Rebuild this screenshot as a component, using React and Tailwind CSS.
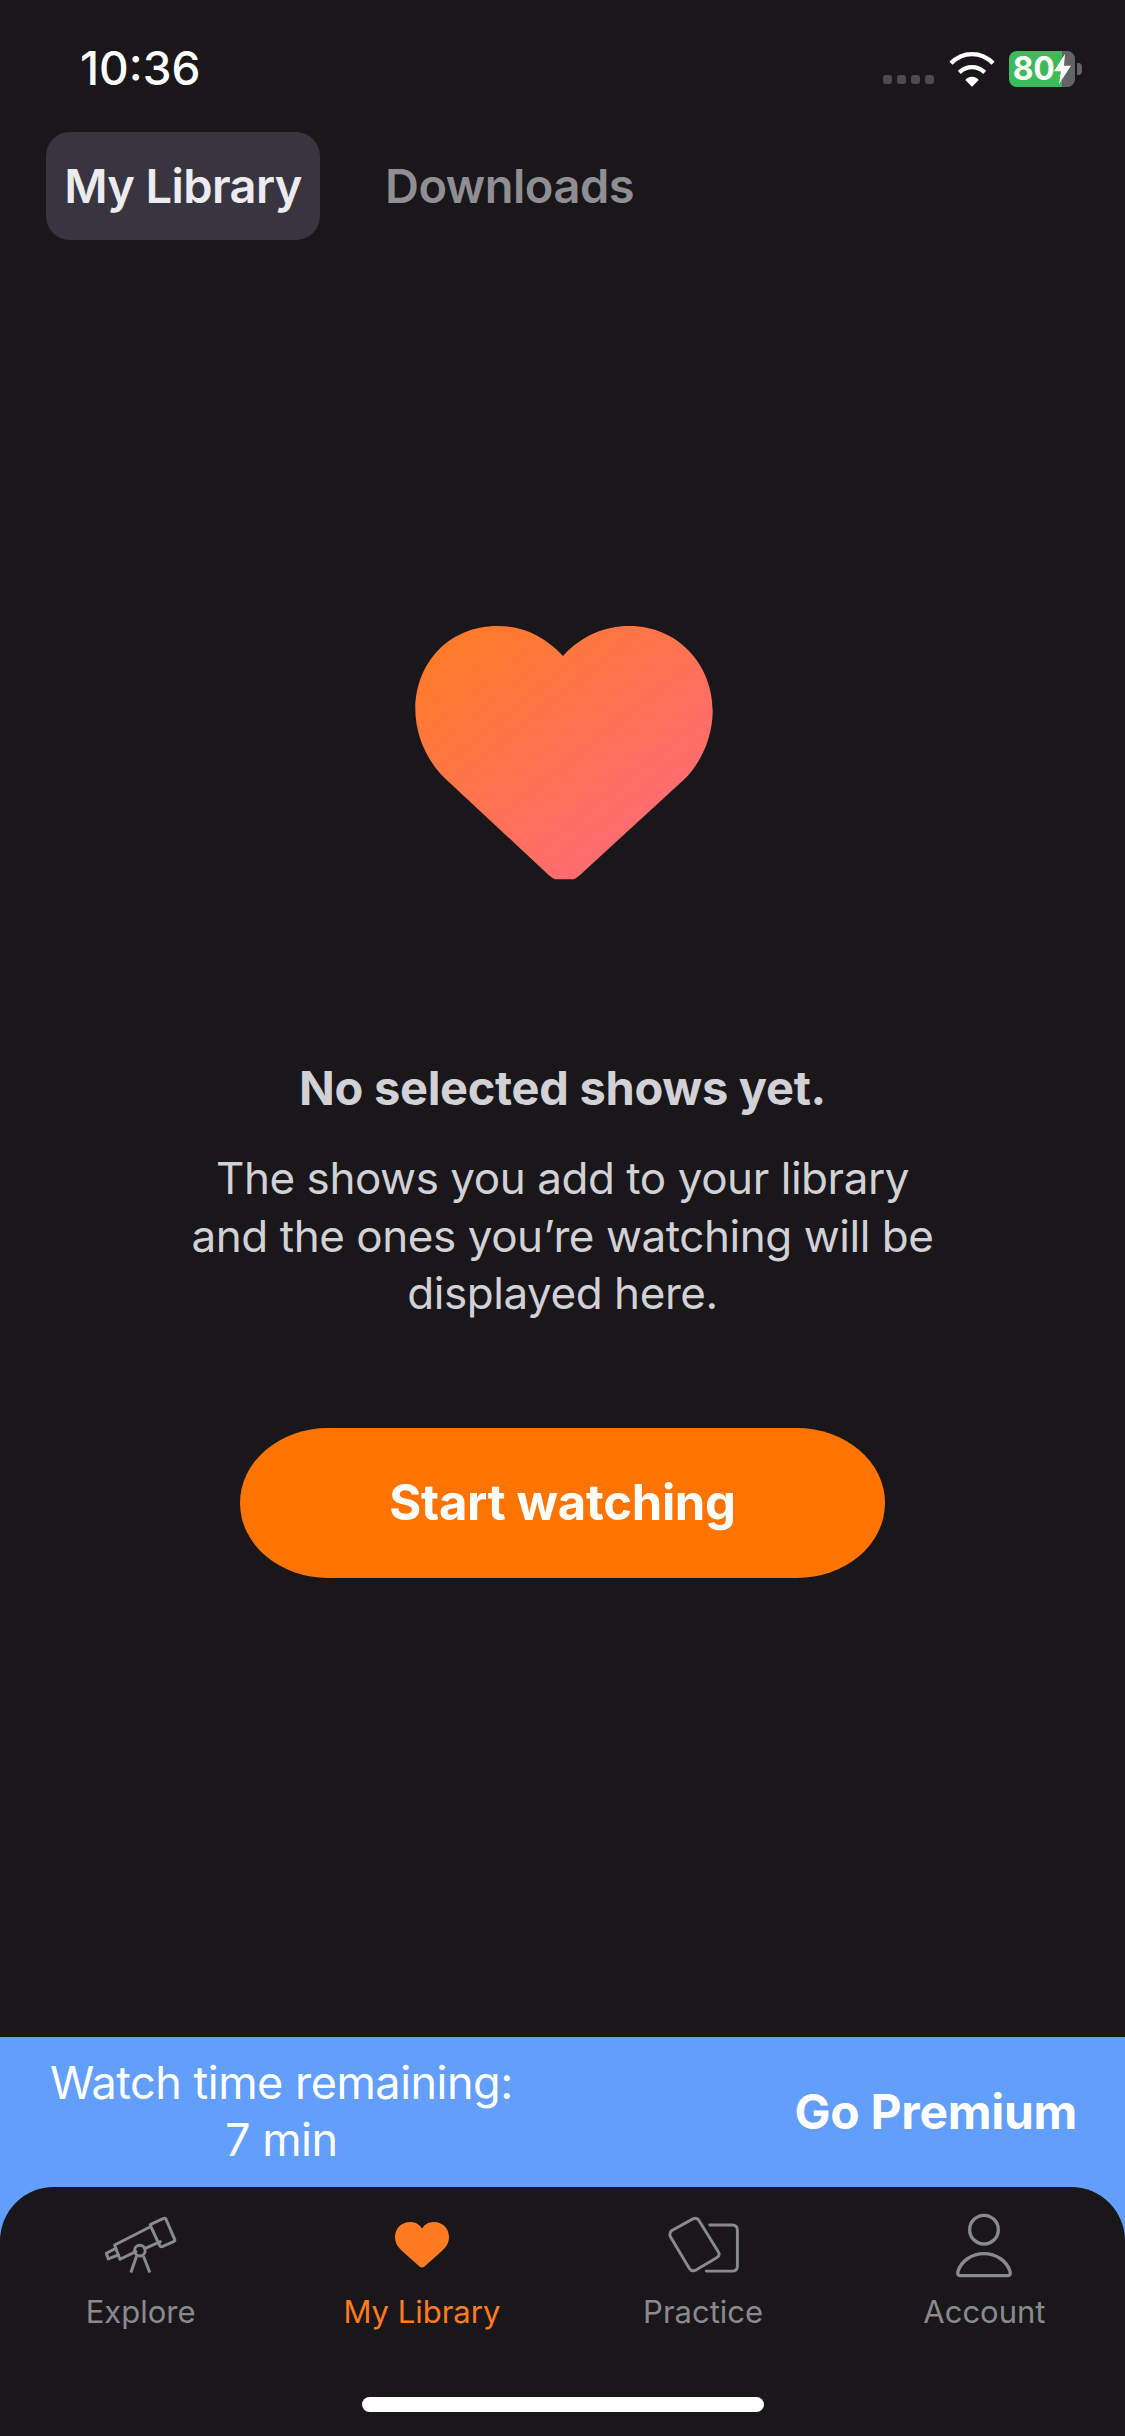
import React from 'react';

const sans = { fontFamily: 'Inter, "Noto Sans", sans-serif' };

const TelescopeIcon = () => (
  <svg className="w-[73px] h-[60px]" viewBox="130 70 220 180" fill="none" stroke="#8a8a8e" strokeWidth={9} strokeLinejoin="round" strokeLinecap="round">
    <path d="M272 97 L310 80 Q315 78 317 83 L343 143 Q345 148 340 150 L305 165 Q300 166 298 162 L270 102 Q268 98 272 97 Z" />
    <path d="M270 105 L162 160 L178 203 L226 180 M254 170 L300 150" />
    <path d="M162 172 L137 185 L143 202 L173 190" />
    <circle cx="238" cy="177" r="16" />
    <path d="M228 194 L211 243 M249 194 L268 243" strokeLinecap="butt" />
  </svg>
);

const HeartIcon = () => (
  <svg className="w-[54px] h-[46px]" viewBox="0 0 54 46">
    <path fill="#fe7b20" d="M27 6.5C24 2 20 0 15 0 6.500 0 0 6.500 0 15c0 5 2 9 6 13l18.500 16.500q2.500 2 5 0L48 28c4-4 6-8 6-13C54 6.500 47.500 0 39 0c-5 0-9 2-12 6.500Z" />
  </svg>
);

const CardsIcon = () => (
  <svg className="w-[73px] h-[60px]" viewBox="75 70 225 185" fill="none" stroke="#8a8a8e" strokeWidth={9} strokeLinejoin="round" strokeLinecap="round">
    <path d="M90 118 L155 82 Q167 76 174 88 L233 183 Q240 195 228 202 L163 240 Q151 246 144 235 L86 138 Q80 125 90 118 Z" />
    <path d="M207 101 H276 Q292 101 292 117 V227 Q292 243 276 243 H196" />
  </svg>
);

const AccountIcon = () => (
  <svg className="w-[60px] h-[66px]" viewBox="940 62 180 198" fill="none" stroke="#8a8a8e" strokeWidth={10} strokeLinejoin="round">
    <circle cx="1030" cy="115" r="43" />
    <path d="M960 253 H1100 Q1111 253 1108 240 C1098 208 1066 187 1030 187 C994 187 962 208 952 240 Q949 253 960 253 Z" />
  </svg>
);

const tabs = [
  { name: 'Explore', icon: <TelescopeIcon /> },
  { name: 'My Library', icon: <HeartIcon />, active: true },
  { name: 'Practice', icon: <CardsIcon /> },
  { name: 'Account', icon: <AccountIcon /> },
];

const StatusBar = () => (
  <div className="h-[132px] flex items-start justify-between pl-[80px] pr-[43px] pt-[44px]">
    <span className="text-[46px] leading-[48px] font-medium text-white">10:36</span>
    <div className="flex items-end pt-[7px]">
      <div className="flex gap-[5px] mr-[15px] mb-[3px]">
        {[0, 1, 2, 3].map((i) => (
          <span key={i} className="w-[9px] h-[9px] rounded-[3px] bg-[#4c4c4e]" />
        ))}
      </div>
      <svg className="w-[46px] h-[36px] mr-[14px]" viewBox="0 0 138 108">
        <path d="M6 37 C40 0 98 0 132 37" fill="none" stroke="#fff" strokeWidth={13} />
        <path d="M31 64 C53 43 85 43 107 64" fill="none" stroke="#fff" strokeWidth={13} />
        <path d="M49 87 C60 74 78 74 89 87 L69 107 Z" fill="#fff" />
      </svg>
      <div className="w-[66px] h-[36px] rounded-[8px] flex items-center justify-center bg-[linear-gradient(90deg,#3dbb5c_80%,#636366_80%)]">
        <span className="text-[32px] leading-none font-bold tracking-[-0.5px] text-white">80</span>
        <svg className="w-[17px] h-[30px]" viewBox="0 0 17 28" preserveAspectRatio="none">
          <path fill="#fff" d="M11 0 L0 16 H7 L5 28 L17 11 H10 Z" />
        </svg>
      </div>
      <span className="w-[5px] h-[12px] ml-[2px] mb-[12px] rounded-r-[4px] bg-[#636366]" />
    </div>
  </div>
);

export default function App() {
  return (
    <div style={sans} className="w-[1125px] h-[2436px] flex flex-col bg-[#1a171a] overflow-hidden">
      <StatusBar />

      {/* Tabs */}
      <div className="flex items-center pl-[46px]">
        <div className="h-[108px] w-[274px] rounded-[24px] bg-[#383540] flex items-center justify-center text-[47px] font-semibold tracking-[-0.6px] text-[#ebebf0]">
          My Library
        </div>
        <span className="ml-[65px] text-[47px] font-semibold tracking-[-0.5px] text-[#8e8e93]">Downloads</span>
      </div>

      {/* Empty state */}
      <div className="flex-1 flex flex-col items-center pt-[361px]">
        <svg className="w-[360px] h-[300px] mr-[4px]" viewBox="0 0 1080 900">
          <defs>
            <linearGradient id="heart" x1="0.1" y1="0.1" x2="0.85" y2="0.9">
              <stop offset="0" stopColor="#ff7b2a" />
              <stop offset="1" stopColor="#ff6a7a" />
            </linearGradient>
          </defs>
          <path fill="url(#heart)" d="M546 165 C490 105 425 75 350 75 C200 75 103 190 103 325 C103 405 140 482 190 530 L490 810 Q510 830 522 835 L578 835 Q590 830 610 810 L910 535 C960 485 995 410 995 330 C995 190 890 75 745 75 C670 75 600 105 546 165 Z" />
        </svg>
        <h1 className="mt-[158px] text-[47px] leading-[58px] font-bold tracking-[-0.3px] text-[#d1d1d6]">No selected shows yet.</h1>
        <p className="mt-[33px] w-[800px] text-center text-[44px] leading-[57.500px] tracking-[-0.45px] text-[#d1d1d6]">
          The shows you add to your library
          <br />
          and the ones you’re watching will be
          <br />
          displayed here.
        </p>
        <button className="mt-[105px] w-[645px] h-[150px] rounded-[88px/75px] bg-[#ff7300] text-[49px] font-bold tracking-[-0.3px] text-white">
          Start watching
        </button>
      </div>

      {/* Premium banner + tab bar */}
      <div className="bg-[#629efc]">
        <div className="h-[150px] flex items-start justify-between pl-[50px] pr-[48px] pt-[17px] text-white">
          <div className="text-center text-[45px] leading-[57px] tracking-[-0.5px]">
            <div>Watch time remaining:</div>
            <div>7 min</div>
          </div>
          <span className="mt-[29px] text-[48px] leading-[57px] font-bold tracking-[-0.3px]">Go Premium</span>
        </div>
        <nav className="h-[249px] rounded-t-[54px] bg-[#1a171a] flex flex-col">
          <div className="grid grid-cols-4 pt-[25px]">
            {tabs.map((tab) => (
              <div key={tab.name} className="flex flex-col items-center">
                <div className="h-[66px] flex items-center justify-center">{tab.icon}</div>
                <span className={`mt-[14px] text-[31px] leading-[40px] ${tab.active ? 'text-[#fe7b20]' : 'text-[#8a8a8e]'}`}>
                  {tab.name}
                </span>
              </div>
            ))}
          </div>
          <div className="mt-auto mb-[24px] self-center w-[402px] h-[15px] rounded-full bg-white" />
        </nav>
      </div>
    </div>
  );
}
